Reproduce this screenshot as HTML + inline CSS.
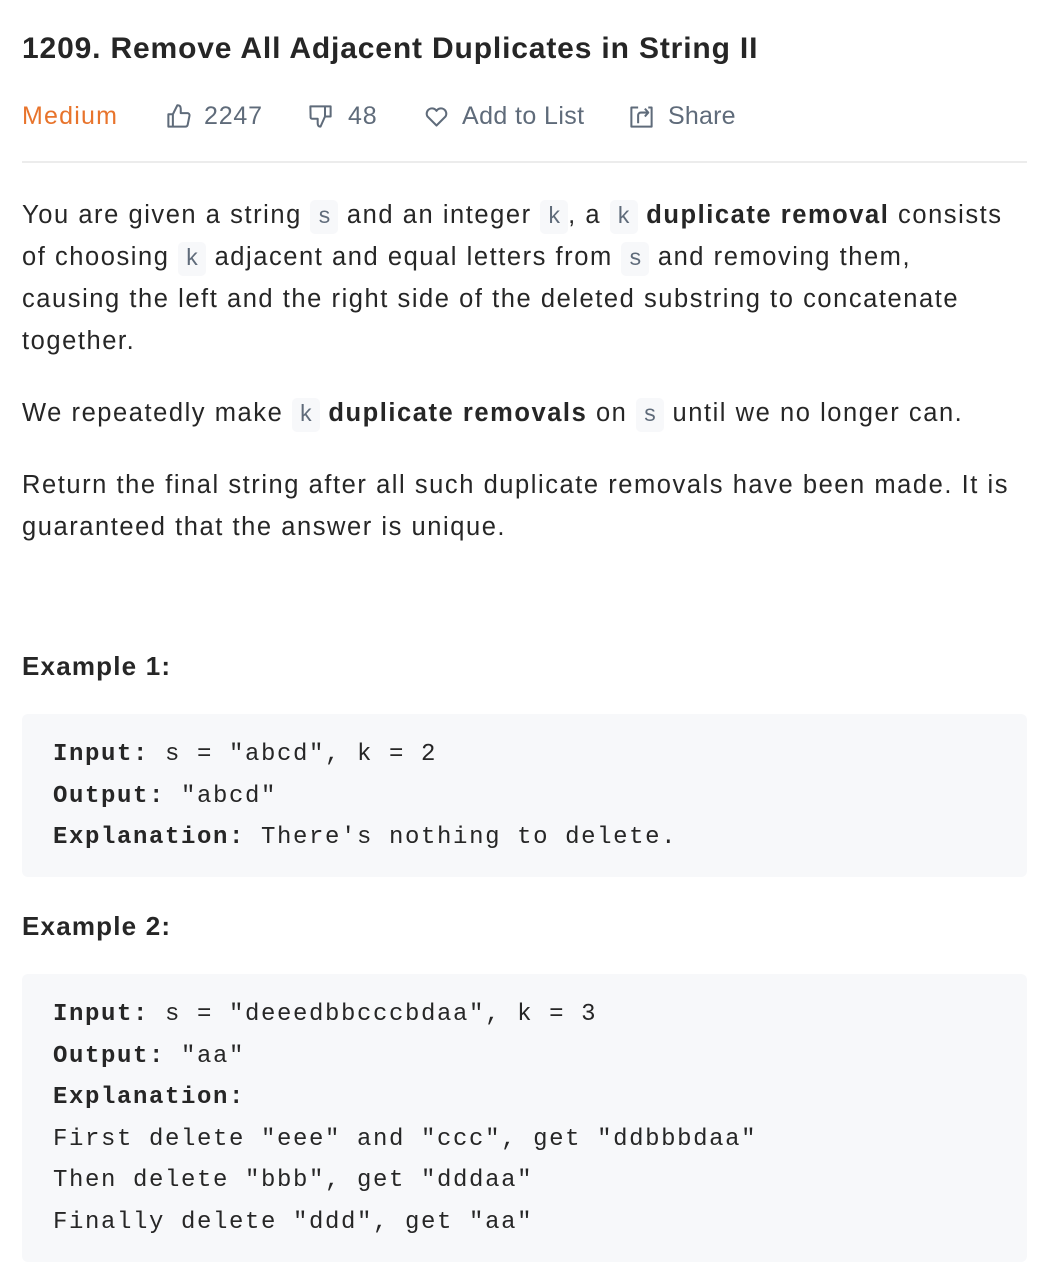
<!DOCTYPE html>
<html><head><meta charset="utf-8"><style>
body{margin:0;background:#fff;width:1046px;height:1286px;position:relative;font-family:"Liberation Sans",sans-serif;color:#262626;overflow:hidden}
.a{position:absolute;left:22px;right:19px}
h1{margin:0;font-size:30px;font-weight:bold;color:#262626;letter-spacing:0.85px}
.hdr{top:98px;height:36px;font-size:25px;letter-spacing:0.8px;color:#5f6b7a}
.hdr span{position:absolute;top:0;height:36px;display:flex;align-items:center}
.hdr svg{position:absolute;top:5px}
.hr{top:161px;height:2px;background:#ececec}
p{margin:0;font-size:25.5px;line-height:42px;letter-spacing:1.55px;white-space:nowrap}
code{font-family:"Liberation Mono",monospace;font-size:23px;background:#f7f8fa;color:#5f6b7a;border-radius:5px;padding:4px 7px;line-height:1;letter-spacing:0}
.h{font-size:26px;font-weight:bold;letter-spacing:1.2px}
pre{margin:0;background:#f7f8fa;border-radius:6px;font-family:"Liberation Mono",monospace;font-size:24px;letter-spacing:1.6px;line-height:41.5px;color:#262626;padding:20px 31px;box-sizing:border-box}
</style></head><body>
<div class="a" style="top:32px"><h1>1209. Remove All Adjacent Duplicates in String II</h1></div>
<div class="a hdr">
<span style="left:0;color:#e8742c;letter-spacing:1.2px">Medium</span>
<svg style="left:143px" width="27" height="27" viewBox="0 0 24 24" fill="none" stroke="#5f6b7a" stroke-width="1.8" stroke-linejoin="round"><path d="M3 10h4v11H3zM7 10l4-8c2 0 3 1 3 3v4h6c1 0 2 1 1.8 2.2l-1.6 8C20 20.5 19 21 18 21H7"/></svg>
<span style="left:182px">2247</span>
<svg style="left:285px" width="27" height="27" viewBox="0 0 24 24" fill="none" stroke="#5f6b7a" stroke-width="1.8" stroke-linejoin="round"><path d="M3 3h18v9h-5l-4 9c-2 0-2.5-1.5-2.5-3v-4H4.5C3.5 14 3 13 3.2 12z M16 3v9"/></svg>
<span style="left:326px">48</span>
<svg style="left:401px" width="27" height="27" viewBox="0 0 24 24" fill="none" stroke="#5f6b7a" stroke-width="1.8" stroke-linejoin="round"><path d="M12 20L4 12a4.5 4.5 0 0 1 8-5 4.5 4.5 0 0 1 8 5z"/></svg>
<span style="left:440px;letter-spacing:0.4px">Add to List</span>
<svg style="left:606px" width="27" height="27" viewBox="0 0 24 24" fill="none" stroke="#5f6b7a" stroke-width="1.8" stroke-linejoin="round"><path d="M9 4H3v17h18V4h-3M9 18v-7c0-1.5 1-2.5 2.5-2.5H18M15 5l3 3.5-3 3.5"/></svg>
<span style="left:646px;letter-spacing:0.2px">Share</span>
</div>
<div class="a hr"></div>
<div class="a" style="top:194px"><p>You are given a string <code>s</code> and an integer <code>k</code>, a <code>k</code> <b>duplicate removal</b> consists<br>of choosing <code>k</code> adjacent and equal letters from <code>s</code> and removing them,<br>causing the left and the right side of the deleted substring to concatenate<br>together.</p></div>
<div class="a" style="top:392px"><p>We repeatedly make <code>k</code> <b>duplicate removals</b> on <code>s</code> until we no longer can.</p></div>
<div class="a" style="top:464px"><p>Return the final string after all such duplicate removals have been made. It is<br>guaranteed that the answer is unique.</p></div>
<div class="a h" style="top:651px">Example 1:</div>
<pre class="a" style="top:714px;height:163px"><b>Input:</b> s = "abcd", k = 2
<b>Output:</b> "abcd"
<b>Explanation:</b> There's nothing to delete.</pre>
<div class="a h" style="top:911px">Example 2:</div>
<pre class="a" style="top:974px;height:288px"><b>Input:</b> s = "deeedbbcccbdaa", k = 3
<b>Output:</b> "aa"
<b>Explanation:</b> 
First delete "eee" and "ccc", get "ddbbbdaa"
Then delete "bbb", get "dddaa"
Finally delete "ddd", get "aa"</pre>
</body></html>
